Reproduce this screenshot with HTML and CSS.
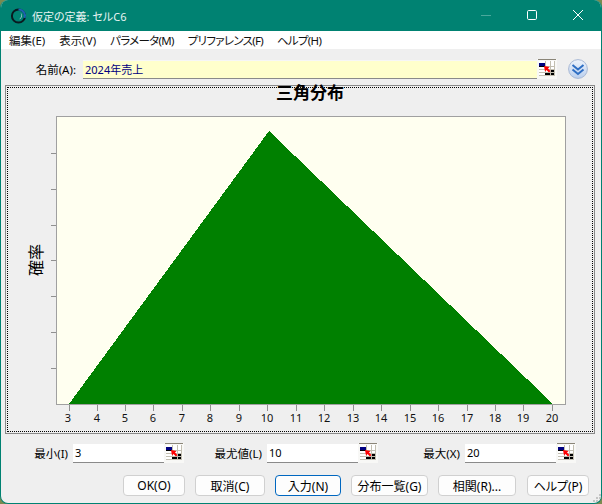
FILE: index.html
```html
<!DOCTYPE html>
<html lang="ja">
<head>
<meta charset="utf-8">
<title>仮定の定義: セルC6</title>
<link rel="stylesheet" href="styles.css">
</head>
<body>
<svg class="defs" width="0" height="0" aria-hidden="true">
  <defs>
    <symbol id="cell" viewBox="0 0 20 20">
      <rect width="20" height="20" fill="#f8f8f6"/>
      <rect x="1" y="0" width="18" height="1" fill="#8a8578"/>
      <rect x="2" y="2" width="16" height="15" fill="#fff"/>
      <path d="M2 7.500H18M2 10.500H18M2 13.500H18M2 16.500H18M8.500 2V17M13.500 2V17M17.500 2V17" stroke="#c2beb0" fill="none"/>
      <rect x="2" y="4" width="6" height="3" fill="#000080"/>
      <rect x="2" y="7" width="6" height="1" fill="#000"/>
      <rect x="8" y="14" width="5" height="2" fill="#000"/>
      <rect x="14" y="11" width="3" height="2" fill="#000"/>
      <rect x="14" y="14" width="3" height="2" fill="#000"/>
      <path d="M7 7L12.500 8L11 9.500L13.500 12L12 13.500L9.500 11L8 12.500Z" fill="#f00"/>
    </symbol>
  </defs>
</svg>
<div class="window">
  <header class="titlebar">
    <svg class="app-icon" width="18" height="18" viewBox="0 0 18 18">
      <circle cx="9.500" cy="9" r="6.600" fill="none" stroke="#0a1a20" stroke-width="2"/>
      <path d="M9.500 2.400A6.600 6.600 0 0 1 15.700 11" fill="none" stroke="#1d63b0" stroke-width="2"/>
      <path d="M11.500 5.500A4 4 0 0 1 10 12.500A5 5 0 0 0 11.500 5.500Z" fill="#b8d8d8"/>
    </svg>
    <span class="title">仮定の定義: セルC6</span>
    <div class="winbtns">
      <svg width="46" height="31" viewBox="0 0 46 31"><path d="M18 15.500H28" stroke="#4aa89c" fill="none"/></svg>
      <svg width="46" height="31" viewBox="0 0 46 31"><rect x="18.500" y="10.500" width="9" height="9" rx="1.200" stroke="#fff" fill="none"/></svg>
      <svg width="46" height="31" viewBox="0 0 46 31"><path d="M18 10L28 20M28 10L18 20" stroke="#fff" fill="none"/></svg>
    </div>
  </header>
  <nav class="menubar">
    <span>編集(E)</span><span>表示(V)</span><span class="kana">パラメータ(M)</span><span class="kana">プリファレンス(F)</span><span class="kana">ヘルプ(H)</span>
  </nav>
  <main class="content">
    <div class="name-row">
      <label class="name-label">名前(A):</label>
      <div class="name-input">2024年売上</div>
      <svg class="cell-icon" width="20" height="20"><use href="#cell"/></svg>
      <svg class="expand" width="20" height="20" viewBox="0 0 20 20">
        <defs><linearGradient id="bl" x1="0" y1="0" x2="0" y2="1"><stop offset="0" stop-color="#eef3fb"/><stop offset="1" stop-color="#b9cfee"/></linearGradient></defs>
        <circle cx="10" cy="10" r="9.400" fill="url(#bl)" stroke="#a8b8d4"/>
        <path d="M4.500 6L10 10.500L15.500 6M4.500 10.500L10 15L15.500 10.500" fill="none" stroke="#2f6fc4" stroke-width="2"/>
      </svg>
    </div>
    <section class="chart-frame">
      <div class="chart-dots">
        <svg class="chart" width="584" height="343" viewBox="8 88 584 343">
          <text class="chart-title" x="310" y="99" text-anchor="middle">三角分布</text>
          <text class="axis-title" transform="translate(42 260) rotate(-90)" text-anchor="middle">確率</text>
          <rect x="56.500" y="116.500" width="509" height="288" fill="#fffff0" stroke="#a0a0a0"/>
          <path class="tri" d="M69 404L269 131L553 404Z" fill="#008000"/>
          <path d="M51 153.500H56M51 189.500H56M51 225.500H56M51 260.500H56M51 296.500H56M51 332.500H56M51 368.500H56" stroke="#909090"/>
          <path d="M69.500 405v6M97.500 405v6M125.500 405v6M153.500 405v6M182.500 405v6M210.500 405v6M239.500 405v6M267.500 405v6M296.500 405v6M324.500 405v6M353.500 405v6M381.500 405v6M410.500 405v6M438.500 405v6M467.500 405v6M495.500 405v6M523.500 405v6M552.500 405v6" stroke="#909090"/>
          <g class="ticks" text-anchor="middle">
            <text x="68" y="422">3</text><text x="97" y="422">4</text><text x="125" y="422">5</text><text x="153" y="422">6</text><text x="182" y="422">7</text><text x="210" y="422">8</text><text x="239" y="422">9</text><text x="267" y="422">10</text><text x="296" y="422">11</text><text x="324" y="422">12</text><text x="353" y="422">13</text><text x="381" y="422">14</text><text x="410" y="422">15</text><text x="438" y="422">16</text><text x="467" y="422">17</text><text x="495" y="422">18</text><text x="523" y="422">19</text><text x="552" y="422">20</text>
          </g>
        </svg>
      </div>
    </section>
    <div class="params">
      <div class="param p-min"><label>最小(I)</label><div class="field">3</div><svg class="cell-icon" width="20" height="20"><use href="#cell"/></svg></div>
      <div class="param p-mode"><label>最尤値(L)</label><div class="field">10</div><svg class="cell-icon" width="20" height="20"><use href="#cell"/></svg></div>
      <div class="param p-max"><label>最大(X)</label><div class="field">20</div><svg class="cell-icon" width="20" height="20"><use href="#cell"/></svg></div>
    </div>
    <div class="buttons">
      <button class="btn b-ok">OK(O)</button>
      <button class="btn b-cancel">取消(C)</button>
      <button class="btn b-enter default">入力(N)</button>
      <button class="btn b-gallery">分布一覧(G)</button>
      <button class="btn b-corr">相関(R)...</button>
      <button class="btn b-help">ヘルプ(P)</button>
    </div>
    <svg class="grip" width="10" height="10" viewBox="0 0 10 10"><path d="M8 1h2v2H8zM5 4h2v2H5zM8 4h2v2H8zM2 7h2v2H2zM5 7h2v2H5zM8 7h2v2H8z" fill="#c4c4c4"/></svg>
  </main>
</div>
</body>
</html>
```
FILE: styles.css
```css
* { box-sizing: border-box; }
html, body { margin: 0; padding: 0; }
body {
  width: 602px;
  height: 504px;
  overflow: hidden;
  background: #7a8a50;
  font-family: "Noto Sans", "Noto Sans CJK JP", sans-serif;
  font-size: 11.5px;
  font-feature-settings: "palt";
  color: #000;
}
.defs { position: absolute; }
.window {
  width: 602px;
  height: 504px;
  display: flex;
  flex-direction: column;
  border-radius: 8px;
  overflow: hidden;
  border: 1px solid #008272;
  border-top: 0;
  background: #efefef;
}
.titlebar {
  height: 31px;
  flex: none;
  display: flex;
  align-items: center;
  background: #008272;
  color: #fff;
  padding-left: 8px;
}
.app-icon { flex: none; }
.title { margin-left: 5px; font-size: 11px; color: #e8f4f2; flex: 1; }
.winbtns { display: flex; }
.winbtns svg { display: block; }
.menubar {
  height: 18px;
  flex: none;
  background: #fff;
  display: flex;
  align-items: center;
  gap: 14px;
  padding-left: 8px;
  color: #111;
}
.kana { letter-spacing: -0.7px; }
.content {
  flex: 1;
  position: relative;
  display: flex;
  flex-direction: column;
  padding-top: 10px;
  min-height: 0;
}
.name-row {
  height: 20px;
  flex: none;
  display: flex;
  align-items: center;
}
.name-label { width: 75px; text-align: right; margin-right: 7px; }
.name-input {
  width: 454px;
  height: 19px;
  background: #ffffcc;
  border-bottom: 1px solid #8a8a8a;
  border-top: 1px solid #f6f6f6;
  color: #000080;
  padding-left: 2px;
  line-height: 17px;
  font-size: 11px;
}
.cell-icon { flex: none; display: block; }
.expand { flex: none; margin-left: 11px; }
.chart-frame {
  flex: none;
  margin: 6px 0 0 4px;
  width: 590px;
  height: 349px;
  border: 1px solid #8a8a8a;
  padding: 1px;
}
.chart-dots {
  border: 1px dotted #000;
  width: 586px;
  height: 345px;
}
.chart { display: block; overflow: visible; }
.chart-title { font-size: 17px; font-weight: 700; fill: #000; }
.axis-title { font-size: 16px; fill: #000; }
.ticks { font-size: 11px; fill: #111; }
.tri { shape-rendering: crispEdges; }
.params {
  height: 20px;
  flex: none;
  margin-top: 9px;
  display: flex;
}
.param { display: flex; align-items: center; }
.param label { text-align: right; margin-right: 5px; flex: none; }
.p-min label { width: 67px; }
.p-mode { margin-left: 16px; }
.p-mode label { width: 62px; }
.p-max { margin-left: 27px; }
.p-max label { width: 55px; }
.field {
  width: 91px;
  height: 19px;
  background: #fff;
  border-bottom: 1px solid #8a8a8a;
  padding-left: 2px;
  line-height: 18px;
  font-size: 11px;
  color: #000;
}
.buttons {
  flex: none;
  margin-top: 12px;
  display: flex;
  gap: 10px;
  padding-left: 122px;
}
.btn {
  height: 21px;
  padding: 0;
  background: #fdfdfd;
  border: 1px solid #d0d0d0;
  border-radius: 4px;
  font: inherit;
  font-size: 12px;
  font-feature-settings: "palt";
  color: #000;
}
.btn.default { border-color: #0067c0; }
.b-ok { width: 62px; }
.b-cancel { width: 70px; }
.b-enter { width: 66px; }
.b-gallery { width: 77px; }
.b-corr { width: 78px; }
.b-help { width: 62px; margin-left: 1px; }
.grip { position: absolute; right: 0; bottom: 0; }
```
